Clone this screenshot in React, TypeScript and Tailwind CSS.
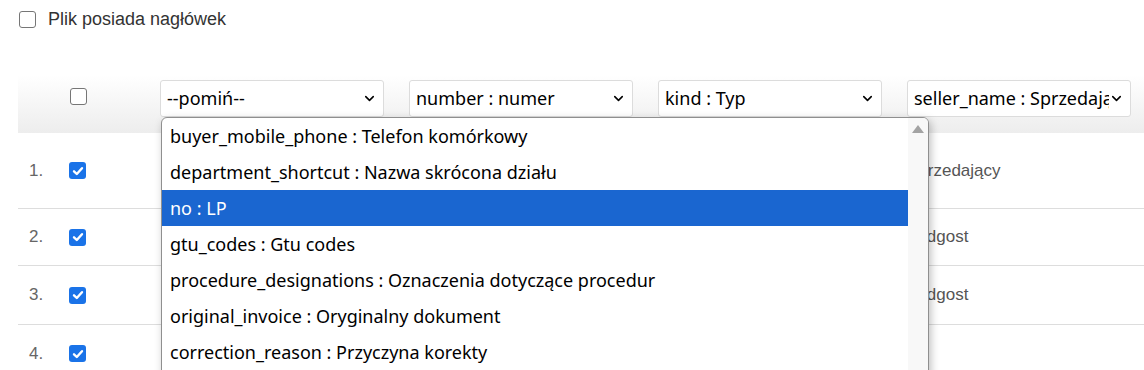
import { ChevronDown } from "lucide-react";

const columns = ["--pomiń--", "number : numer", "kind : Typ", "seller_name : Sprzedający"];

const options = [
  "buyer_mobile_phone : Telefon komórkowy",
  "department_shortcut : Nazwa skrócona działu",
  "no : LP",
  "gtu_codes : Gtu codes",
  "procedure_designations : Oznaczenia dotyczące procedur",
  "original_invoice : Oryginalny dokument",
  "correction_reason : Przyczyna korekty",
  "seller_city : Miasto sprzedającego",
];

const rows = [
  { no: "1.", seller: "Sprzedający", h: "h-[76px]" },
  { no: "2.", seller: "Bydgost", h: "h-[57px]" },
  { no: "3.", seller: "Bydgost", h: "h-[59px]" },
  { no: "4.", seller: "", h: "h-[58px]" },
];

const sel = "font-['Noto_Sans',sans-serif]";

function Check({ checked }: { checked?: boolean }) {
  if (checked) {
    return (
      <span className="flex h-[17px] w-[17px] items-center justify-center rounded-[3px] bg-[#1a73e8]">
        <svg viewBox="0 0 12 12" className="h-[12px] w-[12px]">
          <path d="M2 6.3 L4.8 9 L10 3.2" fill="none" stroke="white" strokeWidth="2.4" strokeLinecap="round" strokeLinejoin="round" />
        </svg>
      </span>
    );
  }
  return <span className="block h-[17px] w-[17px] rounded-[3px] border-[1.5px] border-[#767676] bg-white" />;
}

export default function App() {
  return (
    <div className="relative h-[370px] w-[1144px] overflow-hidden bg-white font-['Liberation_Sans',Arial,sans-serif] text-[#333]">
      {/* header option */}
      <div className="flex items-center gap-[12px] pl-[19px] pt-[10px]">
        <Check />
        <span className="text-[18px] leading-[18px]">Plik posiada nagłówek</span>
      </div>

      {/* table */}
      <div className="ml-[18px] mt-[47px]">
        <div className="flex h-[58px] bg-gradient-to-b from-white to-[#ededed] pt-[5px]">
          <div className="w-[142px] pl-[52px] pt-[8px]">
            <Check />
          </div>
          <div className="flex gap-[25px]">
            {columns.map((c) => (
              <div
                key={c}
                className={`flex h-[37px] w-[224px] items-center justify-between rounded-[3px] border border-[#dcdcdc] bg-white pl-[6px] pr-[6px] text-[18px] text-black ${sel}`}
              >
                <span className="overflow-hidden whitespace-nowrap">{c}</span>
                <ChevronDown className="h-[15px] w-[15px] shrink-0" strokeWidth={2.5} />
              </div>
            ))}
          </div>
        </div>

        {rows.map((r) => (
          <div key={r.no} className={`flex items-center border-b border-[#dddddd] ${r.h}`}>
            <div className="w-[51px] pl-[11px] text-[17px] text-[#666]">{r.no}</div>
            <div className="w-[91px]">
              <Check checked />
            </div>
            <div className="w-[747px]" />
            <div className="text-[17px] text-[#555]">{r.seller}</div>
          </div>
        ))}
      </div>

      {/* open select list */}
      <div className="absolute left-[161px] top-[117px] flex h-[270px] w-[768px] overflow-hidden rounded-t-[6px] border border-[#8f8f8f] bg-white shadow-[2px_3px_8px_rgba(0,0,0,0.25)]">
        <div className={`flex-1 text-[18px] text-black ${sel}`}>
          {options.map((o) => (
            <div
              key={o}
              className={`flex h-[36px] items-center whitespace-nowrap pl-[8px] ${o === "no : LP" ? "bg-[#1a66d0] text-white" : ""}`}
            >
              {o}
            </div>
          ))}
        </div>
        <div className="w-[20px] bg-[#f8f8f8] pt-[7px]">
          <div className="mx-auto h-0 w-0 border-x-[6px] border-b-[8px] border-x-transparent border-b-[#a3a3a3]" />
        </div>
      </div>
    </div>
  );
}
